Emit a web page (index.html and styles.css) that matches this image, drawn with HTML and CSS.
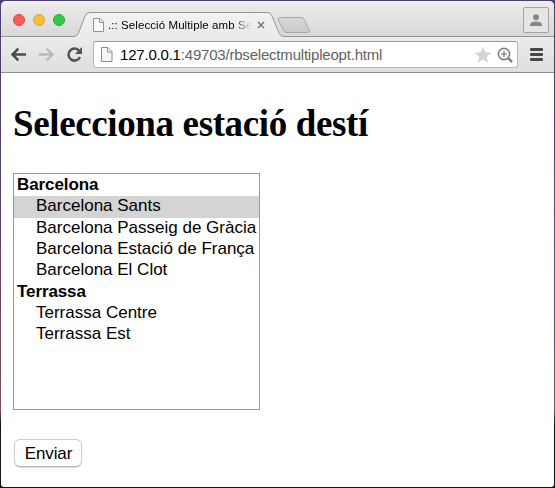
FILE: index.html
```html
<!DOCTYPE html>
<html lang="ca">
<head>
<meta charset="utf-8">
<title>.:: Selecció Multiple amb Select</title>
<link rel="stylesheet" href="styles.css">
</head>
<body>
<div class="window">
  <header class="tabstrip">
    <svg class="tabshape" width="553" height="36" viewBox="1 1 553 36">
      <defs>
        <linearGradient id="tab" x1="0" y1="0" x2="0" y2="1"><stop offset="0" stop-color="#f2f2f2"/><stop offset="1" stop-color="#eaeaea"/></linearGradient>
        <linearGradient id="newtab" x1="0" y1="0" x2="0" y2="1"><stop offset="0" stop-color="#d8d8d8"/><stop offset="1" stop-color="#cbcbcb"/></linearGradient>
      </defs>
      <path d="M1 36.500H74Q77 36.500 78.500 33L85 16Q86.500 12.500 90 12.500H267Q270.500 12.500 272 16L279 33Q280.500 36.500 284 36.500H554V38H1Z" fill="url(#tab)"/>
      <path d="M1 36.500H74Q77 36.500 78.500 33L85 16Q86.500 12.500 90 12.500H267Q270.500 12.500 272 16L279 33Q280.500 36.500 284 36.500H554" fill="none" stroke="#969696"/>
      <path d="M280 17.500H301Q303.500 17.500 304.500 20L309 30Q310 32.500 307.500 32.500H287Q284.500 32.500 283.500 30.500L278.500 20Q277.500 17.500 280 17.500Z" fill="url(#newtab)" stroke="#a9a9a9"/>
    </svg>
    <div class="lights"><i class="red"></i><i class="amber"></i><i class="green"></i></div>
    <div class="tab">
      <svg width="12" height="14" viewBox="0 0 12 14"><path d="M.5.500H7L10.500 4V13.500H.5ZM6.500.500V4.500H10.500" fill="#fafafa" stroke="#949494"/></svg>
      <span class="title">.:: Selecció Multiple amb Se</span>
      <svg class="close" width="8" height="8" viewBox="0 0 8 8"><path d="M1 1L7 7M7 1L1 7" stroke="#777" stroke-width="1.500"/></svg>
    </div>
    <div class="profile"><svg width="14" height="13" viewBox="0 0 14 13"><circle cx="7" cy="3.200" r="3" fill="#888"/><path d="M1 12V10.500C1 8.700 4 7.600 7 7.600S13 8.700 13 10.500V12Z" fill="#888"/></svg></div>
  </header>
  <nav class="toolbar">
    <svg class="controls" width="92" height="35" viewBox="1 37 92 35">
      <path d="M26 54.500H13M18.300 48.700L12.500 54.500L18.300 60.300" fill="none" stroke="#4e4e4e" stroke-width="2.500"/>
      <path d="M39 54.500H52M46.700 48.700L52.500 54.500L46.700 60.300" fill="none" stroke="#b9b9b9" stroke-width="2.300"/>
      <path d="M79.200 50.800A6 6 0 1 0 80 57" fill="none" stroke="#545454" stroke-width="2.600"/><path d="M82 47V54H75Z" fill="#545454"/>
    </svg>
    <div class="address">
      <svg width="12" height="16" viewBox="0 0 12 16"><path d="M.5.500H7L11 4.500V14.500H.5ZM6.500.500V5H11" fill="#f5f5f5" stroke="#8c8c8c"/></svg>
      <span class="url"><b>127.0.0.1</b>:49703/rbselectmultipleopt.html</span>
      <svg class="star" width="18" height="18" viewBox="0 0 18 18"><path d="M9 .5L11.300 6.300L17.400 6.700L12.700 10.700L14.200 16.700L9 13.400L3.800 16.700L5.300 10.700L.6 6.700L6.700 6.300Z" fill="#d4d4d4"/></svg>
      <svg width="16" height="16" viewBox="0 0 16 16"><circle cx="7" cy="7" r="5.600" fill="none" stroke="#828282" stroke-width="1.600"/><path d="M7 4V10M4 7H10" stroke="#777" stroke-width="1.200"/><path d="M11.200 11.200L15 15" stroke="#828282" stroke-width="2.500"/></svg>
    </div>
    <div class="menu"><i></i><i></i><i></i></div>
  </nav>
  <main>
    <h1>Selecciona estació destí</h1>
    <div class="list" role="listbox">
      <div class="group">Barcelona</div>
      <div class="option selected">Barcelona Sants</div>
      <div class="option">Barcelona Passeig de Gràcia</div>
      <div class="option">Barcelona Estació de França</div>
      <div class="option">Barcelona El Clot</div>
      <div class="group">Terrassa</div>
      <div class="option">Terrassa Centre</div>
      <div class="option">Terrassa Est</div>
    </div>
    <button type="button">Enviar</button>
  </main>
</div>
</body>
</html>
```
FILE: styles.css
```css
* { box-sizing: border-box; }
body {
  margin: 0;
  width: 555px;
  height: 488px;
  padding: 1px;
  overflow: hidden;
  background: linear-gradient(#4c3e70 0, #513f6c 20%, #69465f 65%, #80504f 84%, #16121a 87%);
  font-family: "Liberation Sans", Arial, sans-serif;
}
.window { width: 553px; height: 486px; background: #fff; border-radius: 5px 5px 3px 3px; overflow: hidden; }
svg { display: block; flex: none; }
.tabstrip { position: relative; height: 36px; display: flex; background: linear-gradient(#f1f1f1, #e9e9e9 15%, #d8d8d8); }
.tabshape { position: absolute; left: 0; top: 0; }
.lights { position: relative; display: flex; gap: 8px; padding: 13px 0 0 12px; width: 92px; }
.lights i { width: 12px; height: 12px; border-radius: 50%; }
.red { background: #fc5b57; border: 1px solid #e2443f; }
.amber { background: #fdbc40; border: 1px solid #e0a031; }
.green { background: #34c84a; border: 1px solid #24aa35; }
.tab { position: relative; display: flex; align-items: center; width: 175px; height: 25px; margin-top: 11px; }
.title { width: 145px; margin-left: 3px; overflow: hidden; white-space: nowrap; color: #000; font-size: 11.500px; letter-spacing: .08px; line-height: 16px; -webkit-mask-image: linear-gradient(90deg, #000 86%, transparent 99%); }
.close { margin-left: 4px; }
.profile { position: relative; width: 26px; height: 26px; margin: 6px 5px 0 auto; border: 1px solid #a5a5a5; border-radius: 2px; background: #e5e5e5; display: flex; align-items: center; justify-content: center; }
.toolbar { height: 36px; display: flex; background: linear-gradient(#ebebeb, #dfdfdf); border-bottom: 1px solid #8e8e8e; }
.address { width: 425px; height: 27px; margin-top: 4px; padding: 0 4px 0 7px; display: flex; align-items: center; background: #fff; border: 1px solid #b8b8b8; border-top-color: #999; border-radius: 3px; }
.url { margin-left: 7px; flex: 1; white-space: nowrap; color: #626262; font-size: 15px; letter-spacing: -.2px; }
.url b { font-weight: 400; color: #000; }
.star { margin-right: 5px; }
.menu { width: 13px; margin: 11px 0 0 12px; display: flex; flex-direction: column; gap: 2px; }
.menu i { height: 3px; border-radius: 1px; background: #484848; }
main { padding: 28px 0 0 12px; }
h1 { margin: 0; height: 72px; font: bold 37px/45px "Liberation Serif", "Times New Roman", serif; letter-spacing: -.37px; white-space: nowrap; }
.list { width: 247px; height: 237px; padding-top: 1px; border: 1px solid #999; font-size: 17px; line-height: 19.500px; white-space: nowrap; }
.group { height: 21.333px; padding-left: 3px; font-weight: 700; letter-spacing: -.1px; }
.option { height: 21.333px; padding-left: 22px; }
.selected { background: #d4d4d4; }
button { display: block; width: 68px; height: 28px; margin: 29px 0 0 1px; padding: 2px 0 0 1px; border: 1px solid #cfcfcf; border-bottom-color: #b8b8b8; border-radius: 6px; background: #fff; box-shadow: 0 1px 1px #ddd; font: 17px/24px "Liberation Sans", Arial, sans-serif; letter-spacing: -.1px; color: #000; }
```
